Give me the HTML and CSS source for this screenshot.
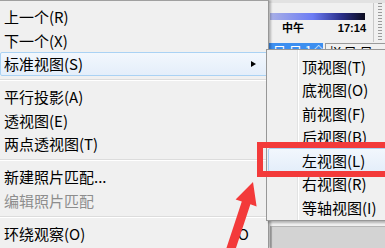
FILE: index.html
```html
<!DOCTYPE html>
<html lang="zh-CN">

<head>
    <meta charset="UTF-8">
    <title>标准视图</title>
    <link rel="stylesheet" href="styles.css">
</head>

<body>
    <div class="screen">
        <div class="menu">
            <div class="item">上一个(R)</div>
            <div class="item">下一个(X)</div>
            <div class="item active"><span>标准视图(S)</span><span class="arrow"></span></div>
            <div class="sep"></div>
            <div class="item">平行投影(A)</div>
            <div class="item">透视图(E)</div>
            <div class="item">两点透视图(T)</div>
            <div class="sep"></div>
            <div class="item">新建照片匹配...</div>
            <div class="item disabled">编辑照片匹配</div>
            <div class="sep"></div>
            <div class="item"><span>环绕观察(O)</span><span class="key">O</span></div>
        </div>

        <div class="side">
            <div class="toolbar">
                <div class="clock">
                    <div class="daybar"></div>
                    <div class="times"><span>中午</span><span>17:14</span></div>
                </div>
                <div class="grip"></div>
            </div>
            <div class="tabs">
                <div class="tab on">目 目 1◇</div>
                <div class="tab">|X 目 目 ▾</div>
            </div>
            <div class="space"></div>
            <div class="panel"></div>
        </div>

        <!-- 子菜单 -->
        <div class="submenu">
            <div class="item">顶视图(T)</div>
            <div class="item">底视图(O)</div>
            <div class="item">前视图(F)</div>
            <div class="item">后视图(B)</div>
            <div class="item active">左视图(L)</div>
            <div class="item">右视图(R)</div>
            <div class="item">等轴视图(I)</div>
        </div>

        <!-- 标注 -->
        <div class="mark"></div>
        <svg class="pointer" width="385" height="248" viewBox="0 0 385 248">
            <polygon fill="#f33a3a"
                points="253,182 256.6,206.4 250.4,204.3 233.2,256.4 224.6,253.6 241.8,201.5 235.6,199.4" />
        </svg>
    </div>
</body>

</html>
```

FILE: styles.css
```css
body {
    margin: 0;
    background: #f0f0f0;
    font-family: "Noto Sans CJK SC", "Noto Sans", sans-serif;
}

.screen {
    position: relative;
    width: 385px;
    height: 248px;
    overflow: hidden;
    display: flex;
}

.menu {
    width: 269px;
    flex-shrink: 0;
    background: #f0f0f0;
    border-top: 1px solid #a0a0a0;
    border-right: 1px solid #979797;
    box-shadow: 2px 0 2px rgba(0, 0, 0, 0.25);
    padding-top: 4px;
    box-sizing: border-box;
    z-index: 1;
}

.item {
    height: 23.5px;
    display: flex;
    align-items: center;
    justify-content: space-between;
    padding: 0 11px 0 4px;
    box-sizing: border-box;
    font-size: 15px;
    color: #000;
    white-space: nowrap;
}

.item.active {
    border: 1px solid #aad2f4;
    border-radius: 2px;
    background: linear-gradient(#f2f7fd, #e4eefa);
    padding-left: 3px;
}

.item.disabled {
    color: #8d8d8d;
}

.arrow {
    width: 0;
    height: 0;
    border-top: 3.5px solid transparent;
    border-bottom: 3.5px solid transparent;
    border-left: 5px solid #000;
}

.key {
    padding-right: 8px;
}

.sep {
    height: 9.5px;
    display: flex;
    flex-direction: column;
    justify-content: center;
}

.sep::before {
    content: "";
    height: 1px;
    background: #dcdcdc;
    border-bottom: 1px solid #fff;
}

.side {
    flex: 1;
    display: flex;
    flex-direction: column;
}

.toolbar {
    height: 42px;
    display: flex;
    border-top: 3px solid #e2e2e2;
    box-sizing: border-box;
}

.clock {
    width: 104px;
    border-right: 1px solid #c8c8c8;
    padding-top: 10px;
}

.daybar {
    width: 95px;
    height: 7px;
    margin-left: 1px;
    background: linear-gradient(90deg, #a9b0e6, #6c7cf4 45%, #2a2f8a 75%, #0b0b1e);
}

.times {
    width: 84px;
    margin: 1px 0 0 13px;
    display: flex;
    justify-content: space-between;
    font-family: "Liberation Sans", "Noto Sans CJK SC", sans-serif;
    font-size: 11px;
    font-weight: bold;
    line-height: 14px;
}

.grip {
    width: 4px;
    margin-left: 4px;
    background: repeating-linear-gradient(#9a9a9a 0 1px, transparent 1px 3px);
}

.tabs {
    height: 7px;
    margin-top: 1px;
    display: flex;
    overflow: hidden;
    font-size: 13px;
    line-height: 16px;
}

.tab {
    height: 16px;
    padding: 0 4px;
    white-space: nowrap;
}

.tab.on {
    width: 46px;
    background: #3d8ff0;
    color: #fff;
    text-align: right;
}

.tab:not(.on) {
    margin-left: 2px;
    border: 1px solid #9a9a9a;
}

.space {
    height: 176px;
}

.panel {
    flex: 1;
    background: #d3d3d3;
    border-top: 1px solid #b5b5b5;
    border-left: 2px solid #b0b0b0;
    margin-left: 1px;
}

.submenu {
    position: absolute;
    left: 266px;
    top: 49px;
    width: 130px;
    padding: 4.25px 0 1px;
    background: #f0f0f0 linear-gradient(90deg, transparent 30px, #e2e3e3 30px 31px, #fff 31px 32px, transparent 32px);
    border: 1px solid #979797;
    box-shadow: 2px 2px 2px rgba(0, 0, 0, 0.25);
    z-index: 2;
}

.submenu .item {
    padding-left: 35px;
}

.submenu .item.active {
    margin-left: 1px;
    padding-left: 33px;
}

.mark {
    position: absolute;
    left: 257px;
    top: 142px;
    width: 140px;
    height: 35px;
    box-sizing: border-box;
    border: 6px solid #f33a3a;
    z-index: 3;
}

.pointer {
    position: absolute;
    left: 0;
    top: 0;
    z-index: 3;
    pointer-events: none;
}
```
